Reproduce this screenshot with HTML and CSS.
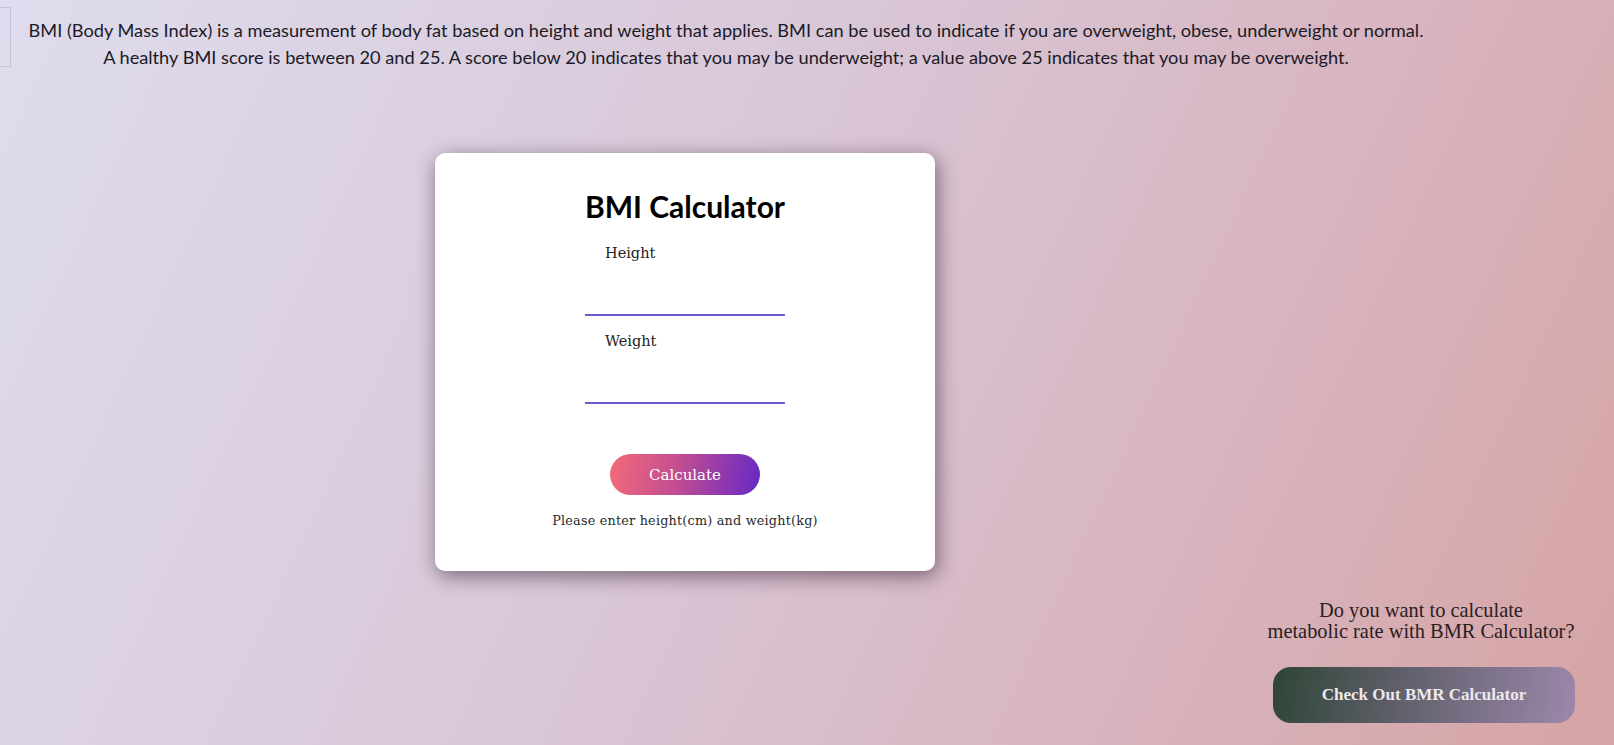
FILE: index.html
```html
<!DOCTYPE html>
<html lang="en">
<head>
<meta charset="utf-8">
<title>BMI Calculator</title>
<link rel="stylesheet" href="styles.css">
</head>
<body>
<div class="page">
  <header class="intro">
    <div class="broken-img"></div>
    <p class="intro-text">BMI (Body Mass Index) is a measurement of body fat based on height and weight that applies. BMI can be used to indicate if you are overweight, obese, underweight or normal.<br>A healthy BMI score is between 20 and 25. A score below 20 indicates that you may be underweight; a value above 25 indicates that you may be overweight.</p>
  </header>
  <main class="stage">
    <div class="card-row">
      <section class="card">
        <h1 class="card-title">BMI Calculator</h1>
        <div class="field">
          <label class="field-label" for="height">Height</label>
          <input class="field-input" id="height" type="text">
        </div>
        <div class="field">
          <label class="field-label" for="weight">Weight</label>
          <input class="field-input" id="weight" type="text">
        </div>
        <button class="calc-btn" type="button">Calculate</button>
        <p class="hint">Please enter height(cm) and weight(kg)</p>
      </section>
    </div>
    <aside class="bmr">
      <p class="bmr-text">Do you want to calculate<br>metabolic rate with BMR Calculator?</p>
      <button class="bmr-btn" type="button">Check Out BMR Calculator</button>
    </aside>
  </main>
</div>
</body>
</html>
```

FILE: styles.css
```css
* { box-sizing: border-box; }

html, body {
  margin: 0;
  padding: 0;
}

body {
  min-height: 745px;
  background: linear-gradient(115deg, #dedcee 0%, #d9c8d8 42%, #d8b6c2 70%, #d6a4a4 100%);
  overflow: hidden;
}

.page {
  min-height: 745px;
  display: flex;
  flex-direction: column;
}

.intro {
  display: flex;
  align-items: flex-start;
  padding-top: 7px;
}

.broken-img {
  flex: 0 0 11px;
  height: 60px;
  border: 1px solid #c6c4d2;
  border-left: none;
}

.intro-text {
  flex: 0 0 1430px;
  margin: 10px 0 0;
  font-family: Lato, "Liberation Sans", sans-serif;
  font-size: 18.2px;
  line-height: 27px;
  color: #1b1a26;
  text-align: center;
}

.stage {
  display: flex;
  flex-direction: column;
  padding-top: 82px;
}

.card-row {
  width: 1370px;
  display: flex;
  justify-content: center;
}

.card {
  width: 500px;
  background: #fff;
  border-radius: 10px;
  box-shadow: 2px 5px 20px rgba(40, 20, 40, 0.55);
  display: flex;
  flex-direction: column;
  align-items: center;
  padding: 33px 0 42px;
}

.card-title {
  margin: 0;
  font-family: Lato, "Open Sans", sans-serif;
  font-weight: 700;
  font-size: 30px;
  line-height: 40px;
  color: #000;
}

.field {
  width: 200px;
  display: flex;
  flex-direction: column;
  margin-top: 18px;
}

.field + .field {
  margin-top: 16px;
}

.field-label {
  padding-left: 20px;
  font-family: "DejaVu Serif", serif;
  font-size: 14.5px;
  line-height: 18px;
  color: #222;
}

.field-input {
  height: 54px;
  border: none;
  border-bottom: 2px solid #6e5ccc;
  background: transparent;
  outline: none;
  padding: 0;
}

.calc-btn {
  margin-top: 50px;
  width: 150px;
  height: 41px;
  border: none;
  border-radius: 21px;
  background: linear-gradient(100deg, #f46a78 0%, #c24d92 45%, #6628c6 100%);
  color: #fff;
  font-family: "DejaVu Serif", serif;
  font-size: 15px;
}

.hint {
  margin: 18px 0 0;
  font-family: "DejaVu Serif", serif;
  font-size: 12.8px;
  line-height: 16px;
  color: #2a2a2a;
  letter-spacing: 0.2px;
}

.bmr {
  align-self: flex-end;
  width: 302px;
  margin-right: 39px;
  margin-top: 29px;
  display: flex;
  flex-direction: column;
  align-items: center;
}

.bmr-text {
  margin: 0;
  padding-right: 6px;
  font-family: "Liberation Serif", serif;
  font-size: 20.4px;
  line-height: 20.5px;
  color: #2a2022;
  text-align: center;
  white-space: nowrap;
}

.bmr-btn {
  margin-top: 26px;
  width: 302px;
  height: 56px;
  border: none;
  border-radius: 18px;
  background: linear-gradient(100deg, #2e4536 0%, #5e5e68 40%, #9c88ac 100%);
  color: #ece8ec;
  font-family: "Liberation Serif", serif;
  font-weight: 700;
  font-size: 17px;
}
```
